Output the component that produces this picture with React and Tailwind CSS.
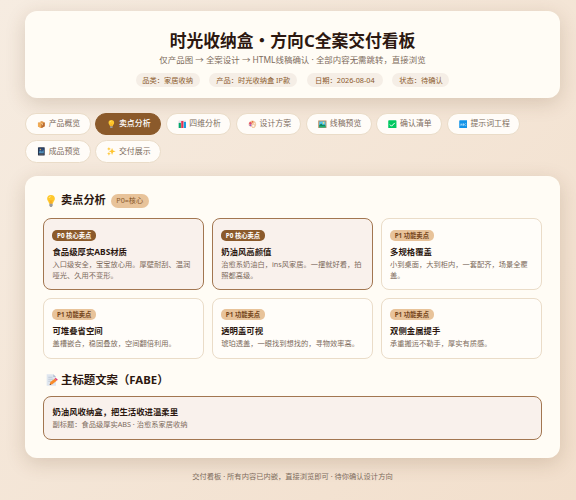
import clsx from 'clsx';

function Emoji({ name, className }) {
  return (
    <svg viewBox="0 0 18 18" className={clsx('shrink-0', className)}>
      {name === 'box' && (
        <>
          <path d="M2 5.5 10 2l6 3v8l-7 4-7-3.5z" fill="#e39a4c" />
          <path d="M2 5.5 9 8.500V17l-7-3.500z" fill="#f0aa55" />
          <path d="M9 8.500 16 5v8l-7 4z" fill="#b86c35" />
          <path d="m5 4.200 7 3v3l-2 1V8L3.500 5z" fill="#f8d39a" />
        </>
      )}
      {name === 'bulb' && (
        <>
          <path d="M9 0a5.800 5.800 0 0 0-5.800 5.800c0 3 2.500 4 3 7.200h5.600c.5-3.200 3-4.200 3-7.200A5.800 5.800 0 0 0 9 0z" fill="#ffc82c" />
          <path d="M7 7.500 8 9v4h2V9l1-1.500" fill="none" stroke="#f39a1f" strokeWidth="1" />
          <path d="M6 4.500a3 3 0 0 1 2.500-2" stroke="#ffe993" strokeWidth="1.500" fill="none" />
          <path d="M6.500 13h5v3L10 18H8l-1.500-2z" fill="#9b9b9b" />
        </>
      )}
      {name === 'chart' && (
        <>
          <rect x="1" y="1" width="16" height="16" rx="1" fill="#e3e1e8" />
          <rect x="1.500" y="6" width="4.500" height="11" fill="#00a96b" />
          <rect x="6.700" y="2" width="4.500" height="15" fill="#e8304f" />
          <rect x="12" y="4" width="4.500" height="13" fill="#159bdd" />
        </>
      )}
      {name === 'palette' && (
        <>
          <path d="M9 1c4.500 0 8 3.500 8 8s-3 8-7 8c-2 0-1.500-2.500-3-3C4.500 13.500 1 13 1 9s3.500-8 8-8z" fill="#f2c9a5" />
          <circle cx="5" cy="6.500" r="2.600" fill="#e64b6b" />
          <circle cx="5" cy="11" r="2.100" fill="#a25ac4" />
          <circle cx="9.500" cy="4" r="1.700" fill="#e8743b" />
          <circle cx="13.500" cy="7.500" r="1.500" fill="#fff1d8" />
          <circle cx="11" cy="12" r="2.300" fill="#fff7ea" />
        </>
      )}
      {name === 'picture' && (
        <>
          <rect x=".5" y="1" width="17" height="16" fill="#b88a5c" />
          <rect x="2.500" y="3" width="13" height="12" fill="#53c5f0" />
          <circle cx="11.500" cy="6" r="1.700" fill="#ffe46b" />
          <path d="m2.500 11 4-4 4 4 2-2 3 3v3h-13z" fill="#12865c" />
          <path d="M2.500 13h13v2h-13z" fill="#25c276" />
        </>
      )}
      {name === 'check' && (
        <>
          <rect x=".5" y=".5" width="17" height="17" rx="1.500" fill="#00c860" />
          <path d="m4 9.500 3.300 3.300L14 6" fill="none" stroke="#fff" strokeWidth="2" />
        </>
      )}
      {name === 'keys' && (
        <>
          <rect x=".5" y=".5" width="17" height="17" rx="1.500" fill="#1293e8" />
          <path d="m3 11.500 1.500-4 1.500 4M3.500 10.300h2M8 7.500v4h1.500a1 1 0 0 0 0-2H8h1.300a1 1 0 0 0 0-2zM15 8a2 2 0 1 0 0 3" fill="none" stroke="#d8f0ff" strokeWidth="1" />
        </>
      )}
      {name === 'frame' && (
        <>
          <rect x="2" y=".5" width="14" height="17" rx="1" fill="#26354e" />
          <rect x="4" y="3" width="10" height="10" fill="#304f7d" />
          <path d="m4 10 3-3 3 3 4-4v7H4z" fill="#4f8fba" />
          <circle cx="7" cy="5" r="1.300" fill="#e9a84c" />
          <path d="M4 15h10" stroke="#8a7360" strokeWidth="1.300" />
        </>
      )}
      {name === 'sparkles' && (
        <g fill="#ffc42e">
          <path d="m10.500 2 2 5 5.500 2-5.500 2-2 5.500-2-5.500L4 9l4.500-2z" />
          <path d="m4 0 1 2.800L8 4l-3 1-1 3-1-3-3-1 3-1.200z" />
          <path d="m4 10 1.100 2.900L8 14l-2.900 1.100L4 18l-1.100-2.900L0 14l2.900-1.100z" />
        </g>
      )}
      {name === 'memo' && (
        <>
          <path d="M1 .5h10l4 4v13H1z" fill="#dfe6ef" />
          <path d="M11 .5v4h4z" fill="#b5bfd0" />
          <path d="M3.500 5h6M3.500 8h7M3.500 11h4" stroke="#b4bfce" strokeWidth="1" />
          <path d="m5.500 16.500 1-4.500 6.500-5 3 3.200-6.500 5.300z" fill="#f98a28" />
          <path d="m13 7 1.500-1.200 3.300 3L16 10.200z" fill="#e63d77" />
          <path d="m5.500 16.500.6-2 1.600 1.400z" fill="#4c3b3b" />
        </>
      )}
    </svg>
  );
}

const meta = [
  { text: '品类：家居收纳', width: 'w-[64px]' },
  { text: '产品：时光收纳盒 IP款', width: 'w-[88px]' },
  { text: '日期：2026-08-04', width: 'w-[76px]' },
  { text: '状态：待确认', width: 'w-[57px]' },
];

const tabs = [
  { icon: 'box', label: '产品概览' },
  { icon: 'bulb', label: '卖点分析', active: true },
  { icon: 'chart', label: '四维分析' },
  { icon: 'palette', label: '设计方案' },
  { icon: 'picture', label: '线稿预览' },
  { icon: 'check', label: '确认清单' },
  { icon: 'keys', label: '提示词工程', wide: true },
  { icon: 'frame', label: '成品预览' },
  { icon: 'sparkles', label: '交付展示' },
];

const points = [
  { core: true, title: '食品级厚实ABS材质', desc: '入口级安全，宝宝放心用。厚壁耐刮、温润哑光、久用不变形。' },
  { core: true, title: '奶油风高颜值', desc: '治愈系奶油白，ins风家居。一摆就好看，拍照都高级。' },
  { title: '多规格覆盖', desc: '小到桌面，大到柜内，一套配齐，场景全覆盖。' },
  { title: '可堆叠省空间', desc: '盖槽嵌合，稳固叠放，空间翻倍利用。' },
  { title: '透明盖可视', desc: '琥珀透盖，一眼找到想找的，寻物效率高。' },
  { title: '双侧金属提手', desc: '承重搬运不勒手，厚实有质感。' },
];

function PointCard({ core, title, desc }) {
  return (
    <div className={clsx('rounded-[8px] border px-[8.4px] pt-[10.5px]', core ? 'border-[#a27650] bg-[#f9f1ec]' : 'border-[#eadcc8] bg-[#fffdf9]')}>
      <div className={clsx('flex h-[11px] w-[43.5px] items-center justify-center whitespace-nowrap rounded-[5px] text-[6.3px] font-bold', core ? 'bg-[#8b5a2b] text-white' : 'bg-[#e8c39a] text-[#75451a]')}>
        {core ? 'P0 核心卖点' : 'P1 功能卖点'}
      </div>
      <h3 className="mt-[4px] text-[8.4px] leading-[13px] font-bold text-[#2c1810]">{title}</h3>
      <p className="mt-px text-[7.25px] leading-[11px] text-[#7d6b5c]">{desc}</p>
    </div>
  );
}

export default function App() {
  return (
    <div className="h-[500px] w-[576px] overflow-hidden bg-linear-135 from-[#f6ece1] to-[#f2dfcc] pt-[11px] pr-[16px] pl-[25px] font-['Noto_Sans','Noto_Sans_CJK_SC',sans-serif] text-[#2c1810]">
      <header className="flex h-[87px] flex-col items-center rounded-[12px] bg-[#fffcf5] pt-[19px] shadow-[0_5px_20px_rgba(90,55,20,0.18)]">
        <h1 className="text-[16.8px] leading-[22px] font-bold whitespace-nowrap">时光收纳盒・方向C全案交付看板</h1>
        <p className="mt-px text-[8.45px] leading-[13px] whitespace-nowrap text-[#7d6b5c]">
          仅产品图 → 全案设计 → HTML线稿确认 · 全部内容无需跳转，直接浏览
        </p>
        <div className="mt-[7px] flex gap-[9.6px]">
          {meta.map((m) => (
            <span key={m.text} className={clsx('flex h-[14px] items-center justify-center rounded-full bg-[#f5eee6] text-[7.25px] whitespace-nowrap text-[#8b5a2b]', m.width)}>
              {m.text}
            </span>
          ))}
        </div>
      </header>

      <nav className="mt-[14.5px] flex flex-wrap gap-x-[4.7px] gap-y-[5px]">
        {tabs.map((t) => (
          <button
            key={t.label}
            className={clsx(
              'flex h-[22.7px] items-center gap-[3px] rounded-full border pl-[11px] text-[7.9px] whitespace-nowrap',
              t.wide ? 'w-[73px]' : 'w-[65.6px]',
              t.active ? 'border-[#8b5a2b] bg-[#8b5a2b] font-medium text-white' : 'border-[#eadcc8] bg-[#fffcf8] text-[#7d6b5c]',
            )}
          >
            <Emoji name={t.icon} className="size-[8.7px]" />
            {t.label}
          </button>
        ))}
      </nav>

      <main className="mt-[13px] h-[282px] rounded-[12px] bg-[#fffcf5] px-[18px] pt-[17px] shadow-[0_5px_20px_rgba(90,55,20,0.18)]">
        <div className="flex h-[16px] items-center">
          <Emoji name="bulb" className="ml-[1.5px] size-[12px]" />
          <h2 className="ml-[4.5px] text-[11.2px] font-bold">卖点分析</h2>
          <span className="ml-[5px] flex h-[14px] w-[38px] items-center justify-center rounded-full bg-[#e8c39a] text-[7.2px] text-[#8b5a2b]">P0=核心</span>
        </div>
        <div className="mt-[9.6px] grid grid-cols-3 grid-rows-[71.7px_61px] gap-x-[7.5px] gap-y-[7.5px]">
          {points.map((p) => (
            <PointCard key={p.title} {...p} />
          ))}
        </div>
        <div className="mt-[13px] flex h-[16px] items-center">
          <Emoji name="memo" className="ml-[2.5px] size-[12px]" />
          <h2 className="ml-[3.5px] text-[11.4px] font-bold">主标题文案（FABE）</h2>
        </div>
        <div className="mt-[8.4px] h-[44px] rounded-[8px] border border-[#a27650] bg-[#f9f1ec] px-[8.4px] pt-[8px]">
          <h3 className="text-[8.4px] leading-[13px] font-bold">奶油风收纳盒，把生活收进温柔里</h3>
          <p className="mt-px text-[7.25px] leading-[11px] text-[#7d6b5c]">副标题：食品级厚实ABS · 治愈系家居收纳</p>
        </div>
      </main>

      <footer className="mt-[13px] text-center text-[7.27px] leading-[11px] text-[#7d6b5c]">
        交付看板 · 所有内容已内嵌，直接浏览即可 · 待你确认设计方向
      </footer>
    </div>
  );
}
